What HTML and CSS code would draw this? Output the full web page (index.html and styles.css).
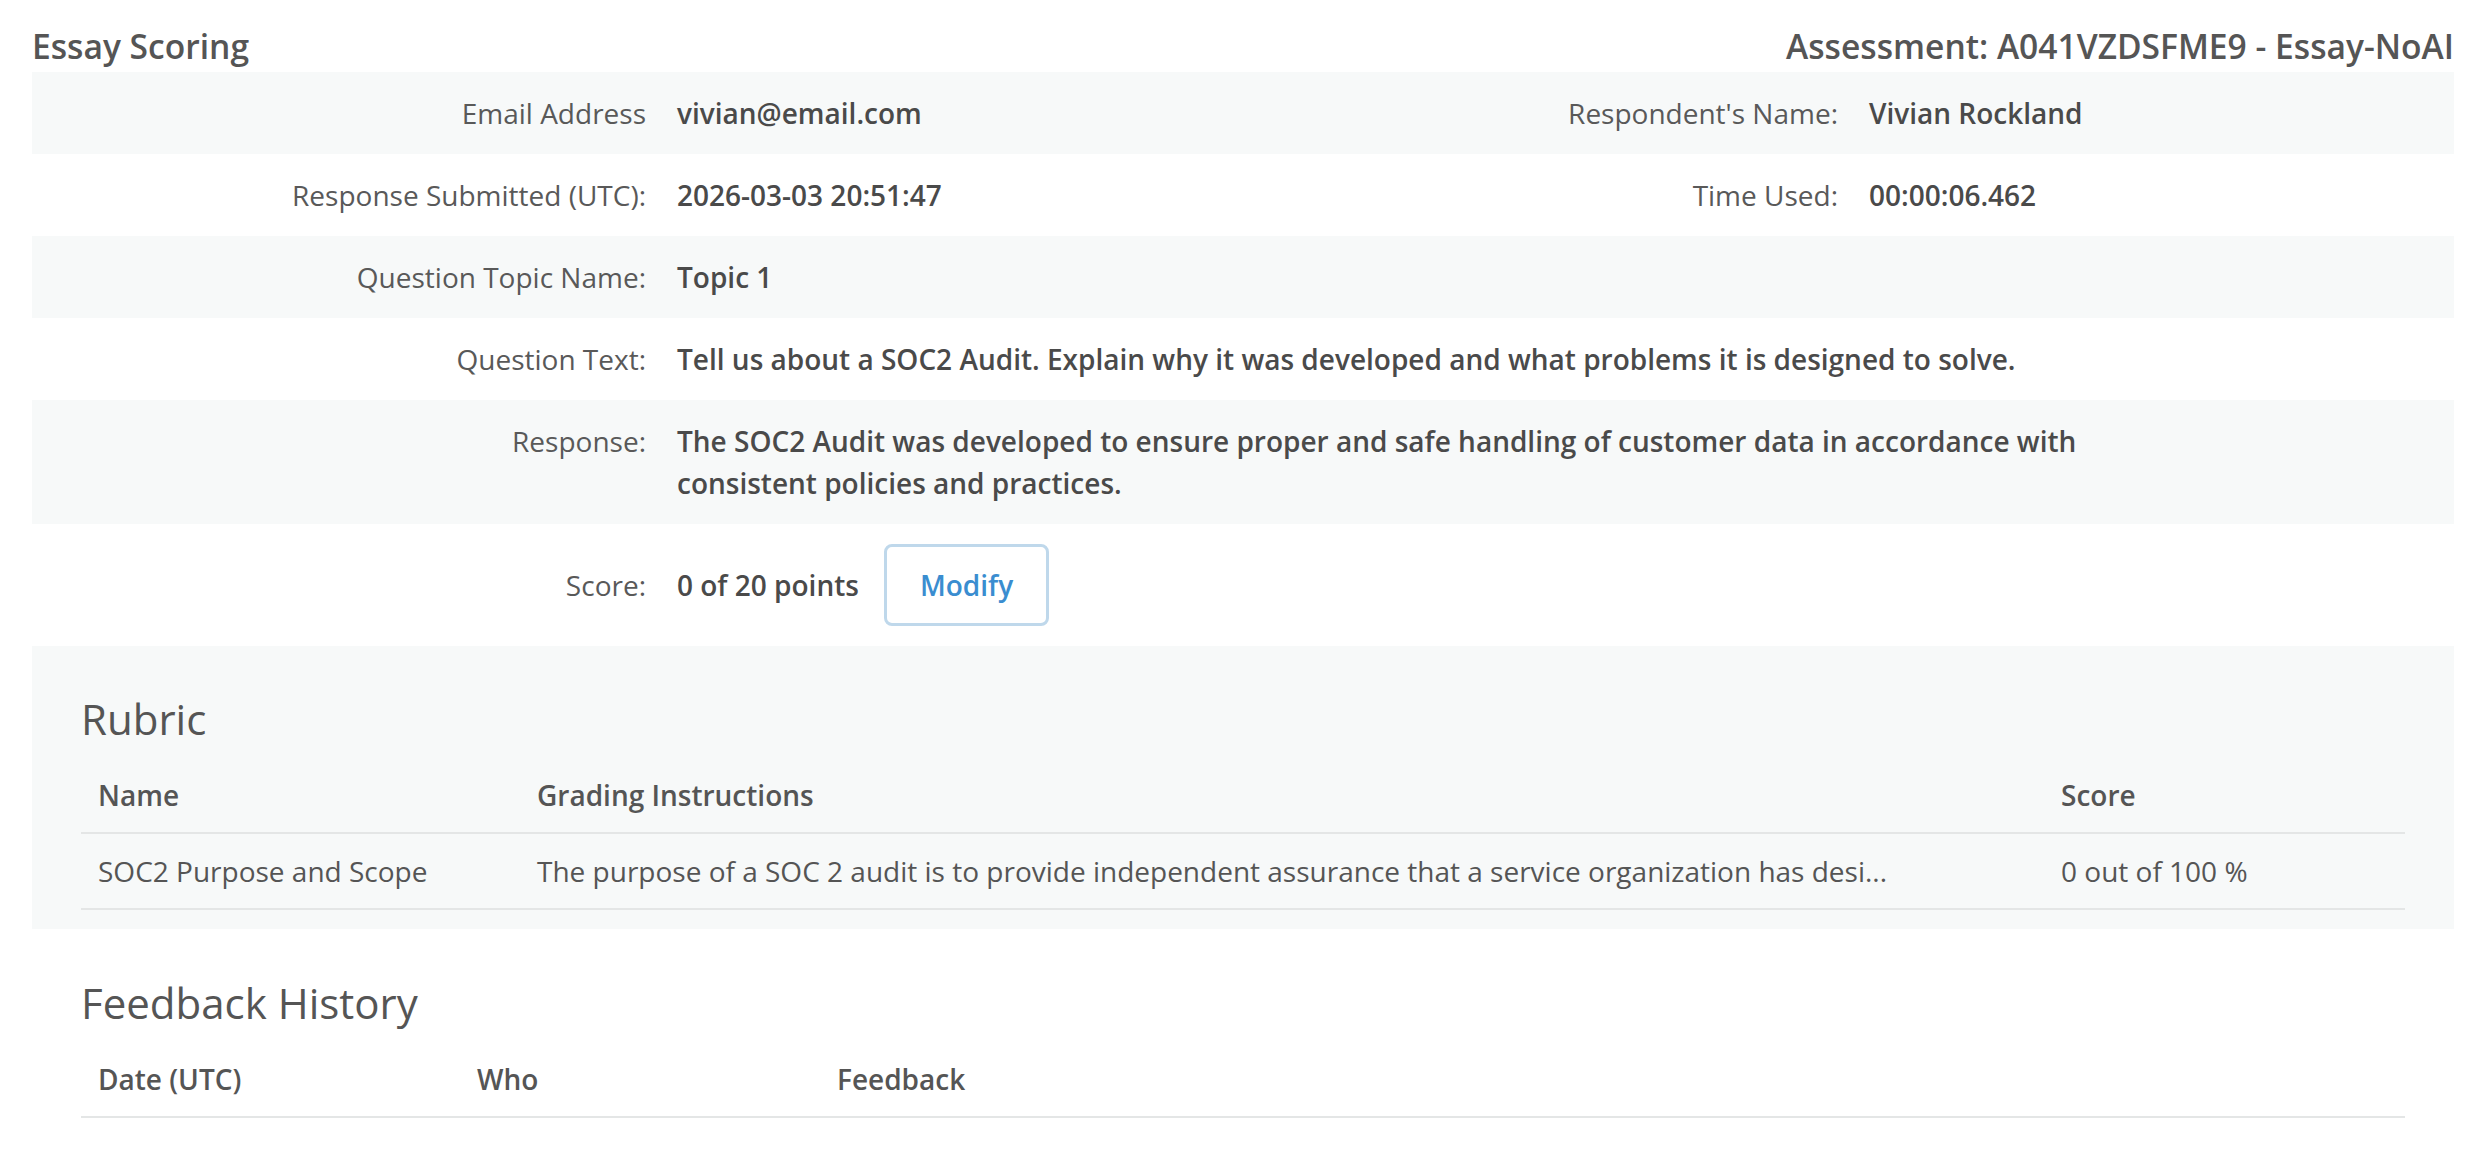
FILE: index.html
```html
<!DOCTYPE html>
<html lang="en">
<head>
<meta charset="utf-8">
<title>Essay Scoring</title>
<link rel="stylesheet" href="styles.css">
</head>
<body>
<div class="page">
  <header class="page-header">
    <h1 class="page-title">Essay Scoring</h1>
    <h2 class="page-title">Assessment: A041VZDSFME9 - Essay-NoAI</h2>
  </header>

  <section class="details">
    <div class="field-row shaded">
      <div class="field-label">Email Address</div>
      <div class="field-value">vivian@email.com</div>
      <div class="field-label">Respondent's Name:</div>
      <div class="field-value">Vivian Rockland</div>
    </div>
    <div class="field-row">
      <div class="field-label">Response Submitted (UTC):</div>
      <div class="field-value">2026-03-03 20:51:47</div>
      <div class="field-label">Time Used:</div>
      <div class="field-value">00:00:06.462</div>
    </div>
    <div class="field-row shaded">
      <div class="field-label">Question Topic Name:</div>
      <div class="field-value wide">Topic 1</div>
    </div>
    <div class="field-row">
      <div class="field-label">Question Text:</div>
      <div class="field-value wide">Tell us about a SOC2 Audit. Explain why it was developed and what problems it is designed to solve.</div>
    </div>
    <div class="field-row shaded">
      <div class="field-label">Response:</div>
      <div class="field-value wide">The SOC2 Audit was developed to ensure proper and safe handling of customer data in accordance with consistent policies and practices.</div>
    </div>
    <div class="field-row centered">
      <div class="field-label">Score:</div>
      <div class="field-value wide score-line">
        <span>0 of 20 points</span>
        <button class="btn-outline" type="button">Modify</button>
      </div>
    </div>
  </section>

  <section class="panel shaded">
    <h3 class="panel-title">Rubric</h3>
    <table class="data-table">
      <thead>
        <tr>
          <th class="col-name">Name</th>
          <th class="col-instructions">Grading Instructions</th>
          <th class="col-score">Score</th>
        </tr>
      </thead>
      <tbody>
        <tr>
          <td>SOC2 Purpose and Scope</td>
          <td>The purpose of a SOC 2 audit is to provide independent assurance that a service organization has desi...</td>
          <td>0 out of 100 %</td>
        </tr>
      </tbody>
    </table>
  </section>

  <section class="panel">
    <h3 class="panel-title">Feedback History</h3>
    <table class="data-table">
      <thead>
        <tr>
          <th class="col-date">Date (UTC)</th>
          <th class="col-who">Who</th>
          <th>Feedback</th>
        </tr>
      </thead>
    </table>
  </section>
</div>
</body>
</html>
```

FILE: styles.css
```css
* {
  box-sizing: border-box;
}

html, body {
  margin: 0;
  padding: 0;
  background: #ffffff;
}

body {
  font-family: "Open Sans", "Noto Sans", "Liberation Sans", sans-serif;
  font-size: 28px;
  line-height: 42px;
  color: #555555;
}

.page {
  padding: 0 32px;
}

/* Title bar */
.page-header {
  display: flex;
  justify-content: space-between;
  align-items: flex-end;
  padding: 26px 0 6px;
}

.page-title {
  margin: 0;
  font-size: 33.6px;
  line-height: 40px;
  font-weight: 600;
  color: #555555;
}

/* Detail rows */
.shaded {
  background: #f7f9f9;
}

.field-row {
  display: grid;
  grid-template-columns: 614px 565px 565px 1fr;
  column-gap: 31px;
  align-items: start;
  padding: 20px 0;
}

.field-row.centered {
  align-items: center;
}

.field-label {
  text-align: right;
  color: #595959;
  font-weight: 400;
}

.field-value {
  font-weight: 600;
  color: #4a4a4a;
}

.field-value.wide {
  grid-column: 2 / -1;
  max-width: 1453px;
}

.score-line {
  display: flex;
  align-items: center;
  gap: 25px;
}

.btn-outline {
  font-family: inherit;
  font-size: 28px;
  line-height: 42px;
  font-weight: 600;
  color: #3a8dd0;
  background: #ffffff;
  border: 3px solid #bfd8eb;
  border-radius: 8px;
  padding: 17px 33px;
  height: 82px;
  cursor: pointer;
}

/* Rubric and feedback panels */
.panel {
  padding: 48px 49px 19px;
}

.panel + .panel {
  padding-top: 49px;
}

.panel-title {
  margin: 0 0 14px;
  font-size: 42px;
  line-height: 50px;
  font-weight: 400;
  color: #555555;
}

.data-table {
  width: 100%;
  border-collapse: collapse;
  table-layout: fixed;
}

.data-table th,
.data-table td {
  text-align: left;
  padding: 16px 17px;
  border-bottom: 2px solid #e4e6e6;
  white-space: nowrap;
  overflow: hidden;
  color: #555555;
}

.data-table th {
  font-weight: 600;
}

.data-table td {
  font-weight: 400;
}

.col-name {
  width: 439px;
}

.col-instructions {
  width: 1524px;
}

.col-score {
  width: 361px;
}

.col-date {
  width: 379px;
}

.col-who {
  width: 360px;
}
```
